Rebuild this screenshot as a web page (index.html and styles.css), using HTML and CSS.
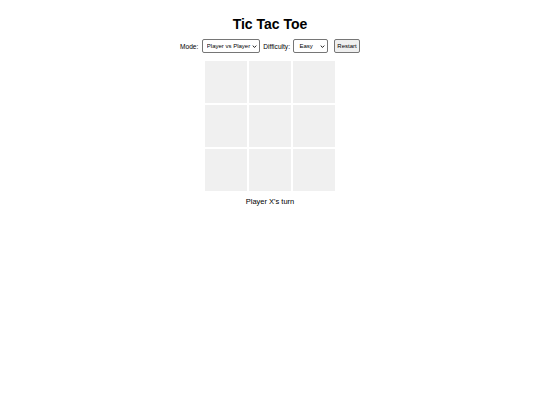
FILE: index.html
```html
<!DOCTYPE html>
<html>
<head>
<meta charset="utf-8">
<title>Tic Tac Toe</title>
<link rel="stylesheet" href="styles.css">
</head>
<body>
<div class="app">
  <h1 class="title">Tic Tac Toe</h1>
  <div class="controls">
    <label class="label" for="mode">Mode:</label>
    <span class="select-wrap">
      <select id="mode" class="select select-mode">
        <option>Player vs Player</option>
        <option>Player vs AI</option>
      </select>
      <svg class="chev" viewBox="0 0 8 5" width="5" height="3"><path d="M1 1 L4 4 L7 1" fill="none" stroke="#000" stroke-width="1.5"/></svg>
    </span>
    <label class="label" for="diff">Difficulty:</label>
    <span class="select-wrap">
      <select id="diff" class="select select-diff">
        <option>Easy</option>
        <option>Medium</option>
        <option>Hard</option>
      </select>
      <svg class="chev" viewBox="0 0 8 5" width="5" height="3"><path d="M1 1 L4 4 L7 1" fill="none" stroke="#000" stroke-width="1.5"/></svg>
    </span>
    <button class="btn">Restart</button>
  </div>
  <div class="board">
    <div class="cell"></div><div class="cell"></div><div class="cell"></div>
    <div class="cell"></div><div class="cell"></div><div class="cell"></div>
    <div class="cell"></div><div class="cell"></div><div class="cell"></div>
  </div>
  <div class="status">Player X's turn</div>
</div>
</body>
</html>
```
FILE: styles.css
```css
html, body {
  margin: 0;
  padding: 0;
  background: #ffffff;
}
body {
  font-family: "Liberation Sans", Arial, sans-serif;
  color: #000;
}
.app {
  display: flex;
  flex-direction: column;
  align-items: center;
  padding-top: 16px;
}
.title {
  font-size: 14px;
  font-weight: bold;
  line-height: 17px;
  margin: 0 0 6px 0;
}
.controls {
  display: flex;
  align-items: center;
  gap: 3.5px;
  font-size: 7px;
  margin-bottom: 8px;
}
.label {
  font-size: 6.6px;
}
.select-wrap {
  position: relative;
  display: flex;
}
.select {
  appearance: none;
  -webkit-appearance: none;
  height: 14px;
  font-size: 6px;
  font-family: "Liberation Sans", Arial, sans-serif;
  border: 1px solid #767676;
  border-radius: 2px;
  background: #fff;
  padding: 0 8px 0 4px;
  color: #000;
}
.select-mode { width: 58px; }
.select-diff { width: 35px; padding-left: 5px; }
.chev {
  position: absolute;
  right: 3px;
  top: 6px;
  pointer-events: none;
}
.btn {
  margin-left: 2px;
  height: 14px;
  width: 26px;
  padding: 0;
  font-size: 6px;
  font-family: "Liberation Sans", Arial, sans-serif;
  background: #efefef;
  border: 1px solid #767676;
  border-radius: 2px;
  color: #000;
}
.board {
  display: grid;
  grid-template-columns: repeat(3, 42px);
  grid-auto-rows: 42px;
  gap: 2px;
}
.cell {
  background: #f0f0f0;
}
.status {
  margin-top: 6px;
  font-size: 7.5px;
}
```
